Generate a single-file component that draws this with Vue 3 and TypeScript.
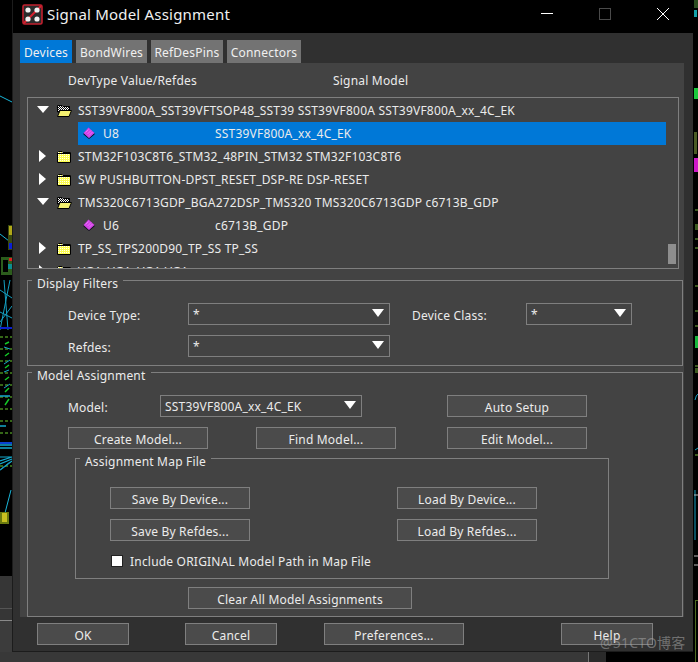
<script setup lang="ts">
interface TreeRow {
  kind: 'open' | 'closed' | 'leaf'
  text: string
  model?: string
  selected?: boolean
}

const tabs: string[] = ['Devices', 'BondWires', 'RefDesPins', 'Connectors']

const rows: TreeRow[] = [
  { kind: 'open', text: 'SST39VF800A_SST39VFTSOP48_SST39 SST39VF800A SST39VF800A_xx_4C_EK' },
  { kind: 'leaf', text: 'U8', model: 'SST39VF800A_xx_4C_EK', selected: true },
  { kind: 'closed', text: 'STM32F103C8T6_STM32_48PIN_STM32 STM32F103C8T6' },
  { kind: 'closed', text: 'SW PUSHBUTTON-DPST_RESET_DSP-RE DSP-RESET' },
  { kind: 'open', text: 'TMS320C6713GDP_BGA272DSP_TMS320 TMS320C6713GDP c6713B_GDP' },
  { kind: 'leaf', text: 'U6', model: 'c6713B_GDP' },
  { kind: 'closed', text: 'TP_SS_TPS200D90_TP_SS TP_SS' },
  { kind: 'closed', text: 'VGA_VGA_VGA VGA' }
]
</script>

<template>
  <div class="page">
    <svg class="canvas" width="698" height="662" viewBox="0 0 698 662">
      <rect x="0" y="576" width="13" height="86" fill="#363636" />
      <rect x="0" y="608" width="13" height="1" fill="#555" />
      <rect x="0" y="620" width="13" height="1" fill="#8a8a8a" />
      <rect x="0" y="621" width="13" height="41" fill="#3c3c3c" />
      <rect x="0" y="652" width="606" height="10" fill="#383838" />
      <rect x="588" y="652" width="1" height="10" fill="#777" />
      <rect x="589" y="652" width="17" height="10" fill="#2a2a2a" />
      <path d="M0 96 L12 102 M0 234 L9 241" stroke="#19b5d8" stroke-width="1" />
      <rect x="8" y="225" width="4" height="25" fill="#3a4a10" />
      <rect x="9" y="226" width="3" height="9" fill="#b0a818" />
      <rect x="9" y="243" width="3" height="6" fill="#0a1fd8" />
      <rect x="1" y="257" width="11" height="18" fill="#2c5c1c" />
      <rect x="3" y="260" width="5" height="12" fill="#000" />
      <rect x="9" y="258" width="3" height="3" fill="#e02020" />
      <rect x="8" y="264" width="4" height="5" fill="#0d8d90" />
      <path d="M0 290 L12 298 M0 322 L12 306 M4 280 L8 330 M10 280 L0 330 M0 312 L12 318" stroke="#159ec0" stroke-width="1" fill="none" />
      <rect x="0" y="327" width="12" height="2" fill="#0a20d0" />
      <g stroke="#356618" stroke-width="2" stroke-dasharray="3 2">
        <path d="M0 337 H12 M0 349 H12 M0 361 H12 M0 373 H12 M0 385 H12 M0 397 H12 M0 409 H12 M0 421 H12 M0 433 H12 M0 466 H12" />
      </g>
      <path d="M5 344 L9 342 M5 356 L9 353 M5 368 L9 365 M5 380 L9 377 M5 392 L9 388 M5 405 L9 399" stroke="#14c828" stroke-width="1.5" />
      <path d="M4 347 L10 349 M4 364 L10 360 M4 372 L9 370 M4 388 L10 384" stroke="#14a8cc" stroke-width="1" />
      <rect x="0" y="442" width="12" height="2" fill="#0a40d0" />
      <path d="M0 396 H10 M0 426 H6 M0 445 H12 M0 448 H12" stroke="#14a8cc" stroke-width="1.5" />
      <path d="M0 457 H12 M0 461 L12 457 M0 464 L12 459 M0 470 L12 461" stroke="#14a8cc" stroke-width="1.2" />
      <path d="M0 470 L10 462" stroke="#1494c0" stroke-width="1" />
      <path d="M11 490 L5 513" stroke="#19b5d8" stroke-width="1" />
      <rect x="0" y="512" width="9" height="12" fill="#6a7a10" />
      <rect x="2" y="513" width="5" height="9" fill="#c8c020" />
      <rect x="694" y="0" width="4" height="8" fill="#2c4c20" />
      <rect x="694" y="10" width="3" height="7" fill="#14a0a8" />
      <rect x="694" y="88" width="4" height="11" fill="#1cc83c" />
      <rect x="694" y="132" width="3" height="22" fill="#4a5a24" />
      <rect x="694" y="158" width="4" height="14" fill="#d018c8" />
      <g fill="#3c5a20">
        <rect x="695" y="209" width="3" height="2" />
        <rect x="695" y="224" width="3" height="6" />
        <rect x="695" y="238" width="3" height="2" />
        <rect x="695" y="247" width="3" height="2" />
        <rect x="695" y="285" width="3" height="2" />
        <rect x="695" y="310" width="3" height="2" />
        <rect x="695" y="325" width="3" height="2" />
        <rect x="695" y="365" width="3" height="2" />
        <rect x="695" y="368" width="3" height="5" />
        <rect x="695" y="454" width="3" height="2" />
      </g>
      <rect x="695" y="336" width="3" height="12" fill="#18b83c" />
      <path d="M695 400 Q696 395 698 394 M695 450 L698 448 M695 490 V540" stroke="#159ec0" fill="none" />
      <path d="M694 495 H698 M694 556 H698 M694 565 H698" stroke="#b8b8b8" />
      <rect x="695" y="600" width="1" height="62" fill="#4d6a20" />
      <rect x="695" y="600" width="3" height="1" fill="#4d6a20" />
    </svg>

    <div class="win">
      <header class="title">
        <svg class="logo" width="21" height="21" viewBox="0 0 21 21">
          <rect x="1" y="1" width="19" height="19" rx="1.5" fill="#2b2b2b" stroke="#c3202f" stroke-width="1.6" />
          <path d="M2 19 L19 2" stroke="#d8202f" stroke-width="2" />
          <circle cx="6" cy="6" r="2.6" fill="#f2f2f2" />
          <circle cx="15" cy="6" r="2.6" fill="#f2f2f2" />
          <circle cx="6" cy="15" r="2.6" fill="#f2f2f2" />
          <circle cx="15" cy="15" r="2.6" fill="#f2f2f2" />
        </svg>
        <span class="title-text">Signal Model Assignment</span>
        <span class="spacer"></span>
        <svg class="wc" width="14" height="14" viewBox="0 0 14 14"><path d="M1 6.5 H13" stroke="#fff" /></svg>
        <svg class="wc wc-max" width="14" height="14" viewBox="0 0 14 14"><rect x="1.5" y="1.5" width="11" height="11" fill="none" stroke="#4a4a4a" /></svg>
        <svg class="wc wc-close" width="14" height="14" viewBox="0 0 14 14"><path d="M1 1 L13 13 M13 1 L1 13" stroke="#fff" /></svg>
      </header>

      <nav class="tabs">
        <div v-for="(t, i) in tabs" :key="t" class="tab" :class="[`tab-${i}`, { active: i === 0 }]">{{ t }}</div>
      </nav>

      <main class="panel">
        <div class="cols">
          <span class="col-a">DevType Value/Refdes</span>
          <span>Signal Model</span>
        </div>

        <div class="tree">
          <div v-for="r in rows" :key="r.text" class="row" :class="{ leaf: r.kind === 'leaf' }">
            <template v-if="r.kind !== 'leaf'">
              <svg class="arrow" width="12" height="12" viewBox="0 0 12 12">
                <path v-if="r.kind === 'open'" d="M0 2 H12 L6 9 Z" fill="#fff" />
                <path v-else d="M2 0 L9 6 L2 12 Z" fill="#fff" />
              </svg>
              <svg class="folder" width="16" height="13" viewBox="0 0 16 13">
                <defs>
                  <pattern id="dither" width="2" height="2" patternUnits="userSpaceOnUse">
                    <rect width="2" height="2" fill="#fcfc50" />
                    <rect width="1" height="1" fill="#fffff0" />
                  </pattern>
                  <pattern id="check" width="2" height="2" patternUnits="userSpaceOnUse">
                    <rect width="2" height="2" fill="#111" />
                    <rect width="1" height="1" fill="#fff" />
                    <rect x="1" y="1" width="1" height="1" fill="#fff" />
                  </pattern>
                </defs>
                <template v-if="r.kind === 'closed'">
                  <path d="M1.5 2.5 L2.5 1.5 H6 L7 2.5 H14.5 V12.5 H1.5 Z" fill="url(#dither)" stroke="#000" />
                  <rect x="2" y="3" width="12" height="1" fill="#000" />
                </template>
                <template v-else>
                  <path d="M1.5 1.5 H6 L7 2.5 H13.5 V8 H1.5 Z" fill="url(#check)" stroke="#000" />
                  <path d="M1.5 12.5 L4 6.5 H15.5 L13 12.5 Z" fill="#f4f070" stroke="#000" />
                </template>
              </svg>
              <span class="label">{{ r.text }}</span>
            </template>
            <div v-else class="leaf-row" :class="{ selected: r.selected }">
              <svg class="chip" width="12" height="12" viewBox="0 0 12 12">
                <path d="M0.5 6 L6 11 L11.5 6 L11.5 7.5 L6 12 L0.5 7.5 Z" fill="#120a22" />
                <path d="M0.5 6 L5.5 0.5 L11.5 6 L6 11 Z" fill="#d23fe6" />
                <path d="M2.5 5.5 L5.5 2.5 M4.5 7 L8 3.5 M6 8.5 L9.5 5" stroke="#ee90ff" stroke-width="0.7" />
              </svg>
              <span class="leaf-name">{{ r.text }}</span>
              <span>{{ r.model }}</span>
            </div>
          </div>
          <div class="thumb"></div>
        </div>

        <section class="group filters">
          <span class="legend">Display Filters</span>
          <div class="line">
            <label class="lab lab-a">Device Type:</label>
            <div class="select">*<i class="caret"></i></div>
            <label class="lab lab-b">Device Class:</label>
            <div class="select select-s">*<i class="caret"></i></div>
          </div>
          <div class="line line-2">
            <label class="lab lab-a">Refdes:</label>
            <div class="select">*<i class="caret"></i></div>
          </div>
        </section>

        <section class="group assign">
          <span class="legend">Model Assignment</span>
          <div class="line">
            <label class="lab lab-m">Model:</label>
            <div class="select">SST39VF800A_xx_4C_EK<i class="caret"></i></div>
            <button class="btn auto">Auto Setup</button>
          </div>
          <div class="line line-btns">
            <button class="btn">Create Model...</button>
            <button class="btn find">Find Model...</button>
            <button class="btn edit">Edit Model...</button>
          </div>

          <section class="group map">
            <span class="legend">Assignment Map File</span>
            <div class="map-row">
              <button class="btn">Save By Device...</button>
              <button class="btn load">Load By Device...</button>
            </div>
            <div class="map-row map-row-2">
              <button class="btn">Save By Refdes...</button>
              <button class="btn load">Load By Refdes...</button>
            </div>
            <div class="check-row">
              <i class="check"></i>
              <span>Include ORIGINAL Model Path in Map File</span>
            </div>
          </section>

          <button class="btn clear">Clear All Model Assignments</button>
        </section>
      </main>

      <footer class="foot">
        <button class="btn small">OK</button>
        <button class="btn small cancel">Cancel</button>
        <button class="btn prefs">Preferences...</button>
        <button class="btn small help">Help</button>
      </footer>
    </div>

    <span class="mark">@51CTO博客</span>
  </div>
</template>

<style>
html, body { background: #000; }
</style>

<style scoped>
.page {
  position: relative;
  width: 698px;
  height: 662px;
  overflow: hidden;
  background: #000;
  font-family: "Noto Sans", "Open Sans", sans-serif;
  font-size: 12px;
  letter-spacing: 0.2px;
  color: #ebebeb;
}
.canvas { position: absolute; left: 0; top: 0; }
.win {
  position: relative;
  margin-left: 12px;
  width: 681px;
  height: 652px;
  box-sizing: border-box;
  border-left: 1px solid #1c1c1c;
  border-bottom: 1px solid #1c1c1c;
  background: #303030;
}
.title {
  height: 33px;
  background: #000;
  display: flex;
  align-items: center;
}
.logo { margin: -5px 0 0 9px; }
.title-text {
  margin: -6px 0 0 4px;
  font-size: 15px;
  color: #f0f0f0;
  letter-spacing: 0.2px;
}
.spacer { flex: 1; }
.wc { margin-top: -6px; }
.wc-max { margin-left: 44px; }
.wc-close { margin-left: 44px; margin-right: 23px; }
.tabs {
  display: flex;
  gap: 4px;
  margin: 7px 0 0 7px;
}
.tab {
  height: 23px;
  line-height: 25px;
  background: #737373;
  text-align: center;
  color: #f0f0f0;
  width: 71px;
}
.tab-0 { width: 52px; }
.tab-2 { width: 72px; }
.tab-3 { width: 74px; }
.tab.active { background: #0078d7; }
.panel {
  margin-left: 7px;
  width: 664px;
  height: 554px;
  background: #434343;
  box-sizing: border-box;
  padding-left: 7px;
}
.cols {
  height: 34px;
  line-height: 36px;
  display: flex;
}
.col-a { margin-left: 41px; width: 265px; }
.tree {
  position: relative;
  width: 652px;
  height: 172px;
  box-sizing: border-box;
  border: 1px solid #7f7f7f;
  padding-top: 1px;
  overflow: hidden;
}
.row {
  height: 23px;
  display: flex;
  align-items: center;
}
.arrow { margin: -1px 0 0 9px; }
.folder { margin: -1px 0 0 7px; }
.label { margin-left: 6px; white-space: nowrap; }
.leaf-row {
  margin-left: 50px;
  width: 588px;
  height: 23px;
  display: flex;
  align-items: center;
}
.leaf-row.selected { background: #0078d7; }
.chip { margin: -1px 0 0 5px; }
.leaf-name { margin-left: 8px; width: 112px; }
.thumb {
  position: absolute;
  left: 640px;
  top: 146px;
  width: 8px;
  height: 20px;
  background: #8e8e8e;
}
.group {
  position: relative;
  box-sizing: border-box;
  border: 1px solid #7f7f7f;
  width: 656px;
  padding-top: 22px;
}
.legend {
  position: absolute;
  top: -6px;
  left: 4px;
  padding: 0 5px;
  background: #434343;
  line-height: 18px;
}
.filters { margin-top: 11px; height: 86px; }
.assign { margin-top: 6px; height: 245px; }
.line { display: flex; height: 22px; align-items: center; }
.line-2 { margin-top: 10px; }
.lab { flex: none; padding-top: 2px; }
.lab-a { margin-left: 40px; width: 120px; }
.lab-b { margin-left: 22px; width: 114px; }
.lab-m { margin-left: 40px; width: 92px; }
.select {
  position: relative;
  flex: none;
  box-sizing: border-box;
  width: 202px;
  height: 22px;
  line-height: 22px;
  border: 1px solid #7f7f7f;
  padding-left: 4px;
}
.select-s { width: 106px; }
.caret {
  position: absolute;
  right: 5px;
  top: 5px;
  width: 0;
  height: 0;
  border-left: 6px solid transparent;
  border-right: 6px solid transparent;
  border-top: 8px solid #fff;
}
.btn {
  flex: none;
  box-sizing: border-box;
  width: 140px;
  height: 22px;
  padding: 2px 0 0;
  background: #4b4b4b;
  border: 1px solid #7f7f7f;
  color: #ebebeb;
  font: inherit;
  letter-spacing: inherit;
  line-height: 19px;
}
.auto { margin-left: 85px; }
.line-btns { margin-top: 10px; padding-left: 40px; }
.find { margin-left: 48px; }
.edit { margin-left: 51px; }
.map {
  margin: 9px 0 0 47px;
  width: 534px;
  height: 121px;
  padding: 28px 0 0 34px;
}
.map-row { display: flex; }
.map-row-2 { margin-top: 10px; }
.load { margin-left: 147px; }
.check-row {
  display: flex;
  align-items: center;
  height: 14px;
  margin: 13px 0 0 1px;
}
.check {
  box-sizing: border-box;
  width: 12px;
  height: 12px;
  background: #fff;
  border: 1px solid #222;
  margin-right: 7px;
}
.clear {
  display: block;
  width: 224px;
  margin: 8px 0 0 160px;
}
.foot {
  display: flex;
  margin-top: 6px;
  padding-left: 24px;
}
.small { width: 92px; }
.cancel { margin-left: 56px; }
.prefs { margin-left: 47px; }
.help { margin-left: 97px; }
.mark {
  position: absolute;
  left: 600px;
  top: 632px;
  font-family: "Noto Sans", "Noto Sans CJK SC", sans-serif;
  font-size: 14px;
  color: rgba(170, 170, 170, 0.55);
  white-space: nowrap;
}
</style>
